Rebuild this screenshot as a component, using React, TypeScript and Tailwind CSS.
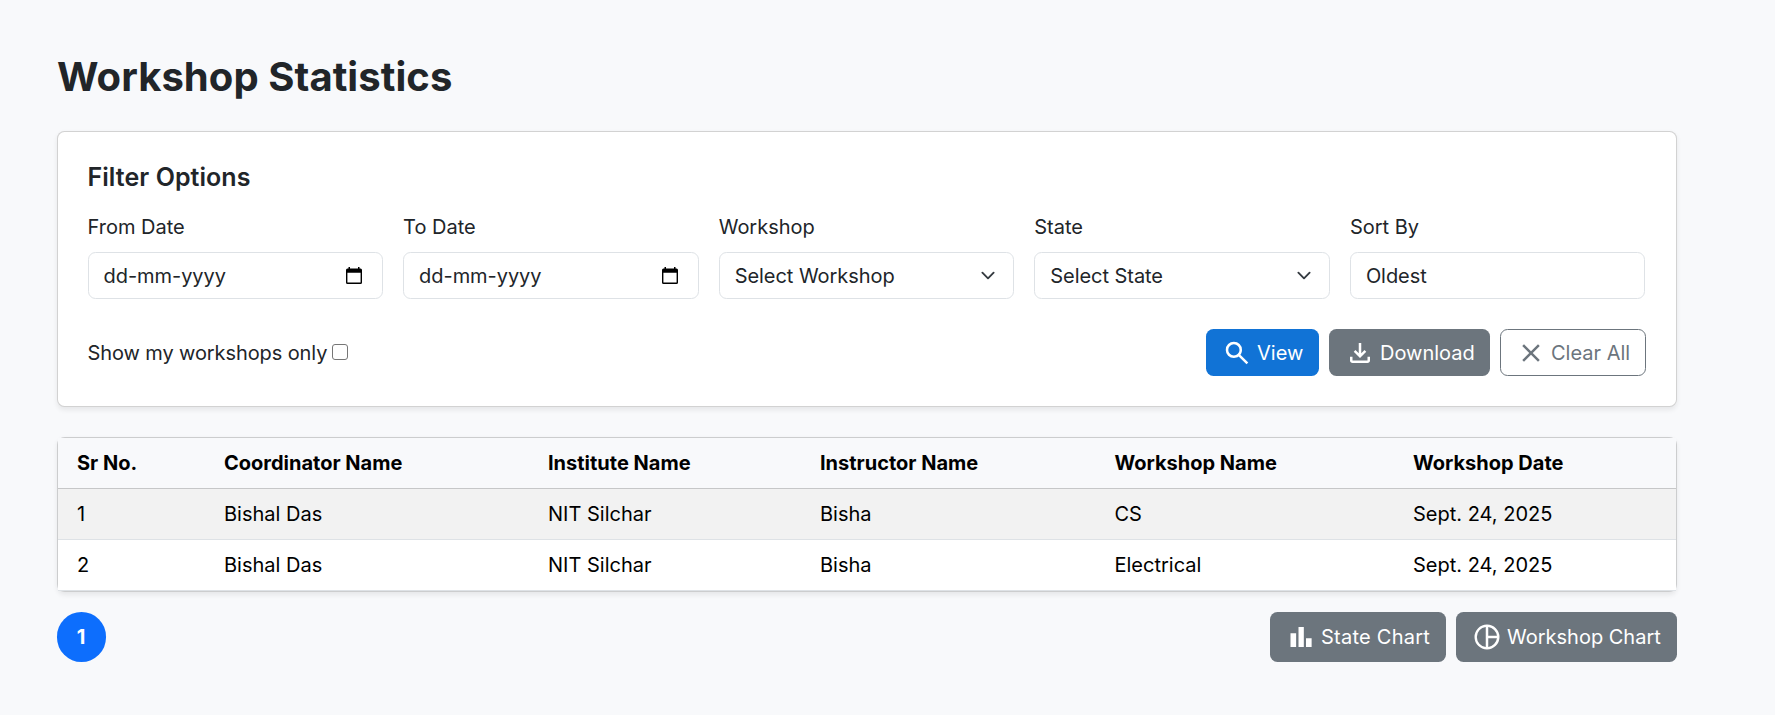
import type { ReactNode } from "react";

const icons = {
  search:
    "M784-120 532-372q-30 24-69 38t-83 14q-109 0-184.500-75.500T120-580q0-109 75.500-184.500T380-840q109 0 184.500 75.500T640-580q0 44-14 83t-38 69l252 252-56 56ZM380-400q75 0 127.500-52.500T560-580q0-75-52.500-127.500T380-760q-75 0-127.500 52.500T200-580q0 75 52.500 127.500T380-400Z",
  download:
    "M480-320 280-520l56-58 104 104v-326h80v326l104-104 56 58-200 200ZM240-160q-33 0-56.500-23.500T160-240v-120h80v120h480v-120h80v120q0 33-23.500 56.500T720-160H240Z",
  close: "m256-200-56-56 224-224-224-224 56-56 224 224 224-224 56 56-224 224 224 224-56 56-224-224-224 224Z",
  bars: "M640-160v-280h180v280H640Zm-240 0v-640h170v640H400Zm-256 0v-440h180v440H144Z",
  pie: "M480-80A400 400 0 1 1 480-880A400 400 0 1 1 480-80ZM440-162V-798A320 320 0 0 0 440-162ZM520-162A320 320 0 0 0 798-440H520ZM520-520H798A320 320 0 0 0 520-798Z",
};

function Icon({ name }: { name: keyof typeof icons }) {
  return (
    <svg viewBox="0 -960 960 960" className="size-[30px] shrink-0" fill="currentColor" fillRule="evenodd">
      <path d={icons[name]} />
    </svg>
  );
}

function Calendar() {
  return (
    <svg viewBox="0 0 16 17" className="mr-[5px] h-[17px] w-4">
      <path
        fill="#000"
        fillRule="evenodd"
        d="M2.500 0h1.500v1.500h8V0h1.500v1.500h1A1.500 1.500 0 0 1 16 3v12.500a1.500 1.500 0 0 1-1.500 1.500h-13A1.500 1.500 0 0 1 0 15.500V3a1.500 1.500 0 0 1 1.500-1.500h1ZM1.400 5.800v9.700h13.200V5.800Z"
      />
    </svg>
  );
}

function Chevron() {
  return (
    <svg viewBox="0 0 16 16" className="h-[15px] w-5">
      <path fill="none" stroke="#343a40" strokeLinecap="round" strokeLinejoin="round" strokeWidth="2" d="m2 5 6 6 6-6" />
    </svg>
  );
}

function Field({ label, value, children }: { label: string; value: string; children?: ReactNode }) {
  return (
    <div className="min-w-0 flex-1">
      <div className="mb-[10px] h-[30px] leading-[30px]">{label}</div>
      <div className="flex h-[47px] items-center justify-between rounded-[7.5px] border border-[#dee2e6] bg-white px-[15px]">
        <span className="tracking-[-0.05px]">{value}</span>
        {children}
      </div>
    </div>
  );
}

const columns = ["Sr No.", "Coordinator Name", "Institute Name", "Instructor Name", "Workshop Name", "Workshop Date"];
const rows = [
  ["1", "Bishal Das", "NIT Silchar", "Bisha", "CS", "Sept. 24, 2025"],
  ["2", "Bishal Das", "NIT Silchar", "Bisha", "Electrical", "Sept. 24, 2025"],
];
const grid = "grid h-[51px] grid-cols-[147px_324px_272px_294.5px_298.5px_1fr] items-center border-b pl-[19px]";

export default function App() {
  return (
    <div className="min-h-screen bg-[#f8f9fb] pl-[57px] pt-[53px] font-['Inter',sans-serif] text-[20px] leading-[30px] text-[#212529]">
      <div className="w-[1620px]">
        <h1 className="mb-[30px] h-12 text-[40px] leading-[48px] font-bold tracking-[0.06px]">Workshop Statistics</h1>

        <section className="h-[276px] rounded-[7.5px] border border-black/17.5 bg-white pr-[30px] pl-[29.5px] pt-[30px] shadow-[0_2.5px_5px_rgba(0,0,0,0.075)]">
          <h2 className="mb-[20px] h-[30px] text-[25px] leading-[30px] font-semibold tracking-[0.06px]">Filter Options</h2>
          <div className="flex gap-5 pr-[0.5px]">
            <Field label="From Date" value="dd-mm-yyyy"><Calendar /></Field>
            <Field label="To Date" value="dd-mm-yyyy"><Calendar /></Field>
            <Field label="Workshop" value="Select Workshop"><Chevron /></Field>
            <Field label="State" value="Select State"><Chevron /></Field>
            <Field label="Sort By" value="Oldest" />
          </div>
          <div className="mt-[30px] flex items-center justify-between">
            <label className="flex items-center gap-[5px] tracking-[-0.1px]">
              Show my workshops only
              <span className="mb-0.5 size-4 rounded-[3px] border border-[#767676] bg-white" />
            </label>
            <div className="flex gap-[10px]">
              <button className="flex h-[47px] w-[113px] items-center gap-[5px] rounded-[7.5px] bg-[#1173d6] pl-4 text-white">
                <Icon name="search" />View
              </button>
              <button className="flex h-[47px] w-[161px] items-center gap-[5px] rounded-[7.5px] bg-[#6c757d] pl-4 text-white">
                <Icon name="download" />Download
              </button>
              <button className="flex h-[47px] w-[146px] items-center gap-[5px] rounded-[7.5px] border border-[#6c757d] pl-[15px] text-[#6c757d]">
                <Icon name="close" />Clear All
              </button>
            </div>
          </div>
        </section>

        <section className="mt-[30px] h-[155px] rounded-[7.5px] border border-black/17.5 shadow-[0_2.5px_5px_rgba(0,0,0,0.075)]">
          <div className="text-black">
            <div className={`${grid} border-[#c6c7c8] bg-[#f8f9fb] font-bold`}>
              {columns.map((c) => <span key={c}>{c}</span>)}
            </div>
            {rows.map((r) => (
              <div key={r[0]} className={`${grid} border-[#dee2e6] odd:bg-white even:bg-[#f2f2f2]`}>
                {r.map((v, i) => <span key={i}>{v}</span>)}
              </div>
            ))}
          </div>
        </section>

        <div className="mt-5 flex justify-between">
          <div className="flex h-[50px] w-[49px] items-center justify-center rounded-full bg-[#0d6efd] pr-px font-bold text-white">1</div>
          <div className="flex gap-[10px]">
            <button className="flex h-[50px] w-[176px] items-center gap-[5px] rounded-[7.5px] bg-[#6c757d] pl-4 tracking-[0.25px] text-white">
              <Icon name="bars" />State Chart
            </button>
            <button className="flex h-[50px] w-[221px] items-center gap-[5px] rounded-[7.5px] bg-[#6c757d] pl-4 text-white">
              <Icon name="pie" />Workshop Chart
            </button>
          </div>
        </div>
      </div>
    </div>
  );
}
